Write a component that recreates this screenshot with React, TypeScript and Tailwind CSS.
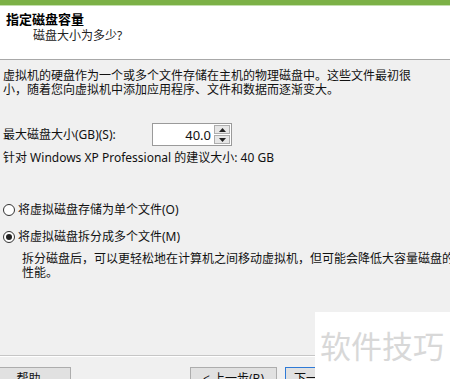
export default function App() {
    return (
        <div
            className="relative w-[450px] h-[379px] overflow-hidden bg-[#f0f0f0] text-[12px] leading-[14px] text-[#111]"
            style={{ fontFamily: '"Noto Sans", "Noto Sans CJK SC", sans-serif' }}
        >
            {/* top strip */}
            <div className="h-[5px] bg-[#7cb147]" />
            <div className="h-px bg-[#c4dfae]" />

            {/* header */}
            <div className="h-[54px] bg-white border-b border-[#a8a8a8] pt-[5px] pl-[6px]">
                <div className="text-[13px] leading-[16px] font-bold text-black">指定磁盘容量</div>
                <div className="leading-[16px] pl-[27px] mt-px text-[#222]">磁盘大小为多少?</div>
            </div>

            {/* body */}
            <div className="pl-[3px] pt-[9px]">
                <div className="whitespace-nowrap">虚拟机的硬盘作为一个或多个文件存储在主机的物理磁盘中。这些文件最初很</div>
                <div className="whitespace-nowrap">小，随着您向虚拟机中添加应用程序、文件和数据而逐渐变大。</div>

                <div className="mt-[26px] flex items-center h-[23px]">
                    <div className="w-[149px]">最大磁盘大小(GB)(S):</div>
                    <div className="flex h-[23px] w-[80px] border border-[#9a9a9a] bg-white">
                        <div className="flex-1 flex items-center justify-end pr-[3px] text-[13px]">40.0</div>
                        <div className="w-[17px] flex flex-col py-px pr-px gap-px">
                            <div className="flex-1 flex items-center justify-center bg-[#e6e6e6] border border-[#adadad]">
                                <svg width="7" height="4" viewBox="0 0 7 4"><path d="M0 4 L3.5 0 L7 4 Z" fill="#222" /></svg>
                            </div>
                            <div className="flex-1 flex items-center justify-center bg-[#e6e6e6] border border-[#adadad]">
                                <svg width="7" height="4" viewBox="0 0 7 4"><path d="M0 0 L3.5 4 L7 0 Z" fill="#222" /></svg>
                            </div>
                        </div>
                    </div>
                </div>

                <div className="mt-[5px] whitespace-nowrap">针对 Windows XP Professional 的建议大小: 40 GB</div>

                <div className="mt-[37px] flex items-center h-[16px] gap-[3px]">
                    <span className="w-[12px] h-[12px] rounded-full border border-[#333] bg-white" />
                    <span>将虚拟磁盘存储为单个文件(O)</span>
                </div>
                <div className="mt-[11px] flex items-center h-[16px] gap-[3px]">
                    <span className="w-[12px] h-[12px] rounded-full border border-[#333] bg-white flex items-center justify-center">
                        <span className="w-[6px] h-[6px] rounded-full bg-[#222]" />
                    </span>
                    <span>将虚拟磁盘拆分成多个文件(M)</span>
                </div>

                <div className="mt-[7px] pl-[19px] whitespace-nowrap">
                    <div>拆分磁盘后，可以更轻松地在计算机之间移动虚拟机，但可能会降低大容量磁盘的</div>
                    <div>性能。</div>
                </div>
            </div>

            {/* footer */}
            <div className="mt-[75px] border-t border-[#c6c6c6]" />
            <div className="h-px bg-white" />
            <div className="mt-[10px] flex items-start">
                <button className="ml-[-14px] w-[85px] h-[23px] border border-[#adadad] bg-[#e1e1e1] text-[12px] leading-[20px]">
                    帮助
                </button>
                <button className="ml-[119px] w-[87px] h-[23px] border border-[#adadad] bg-[#e1e1e1] text-[12px] leading-[20px]">
                    &lt; 上一步(B)
                </button>
                <button className="ml-[8px] w-[87px] h-[23px] border border-[#2f7ad6] bg-[#e1e1e1] text-[12px] leading-[20px] text-left pl-[8px]">
                    下一步(N) &gt;
                </button>
            </div>

            {/* watermark */}
            <div className="absolute left-[315px] top-[312px] w-[140px] h-[70px] bg-white pl-[5px] pt-[16px] text-[31px] leading-[36px] text-[#d8d8d8] whitespace-nowrap">
                软件技巧
            </div>
        </div>
    );
}
